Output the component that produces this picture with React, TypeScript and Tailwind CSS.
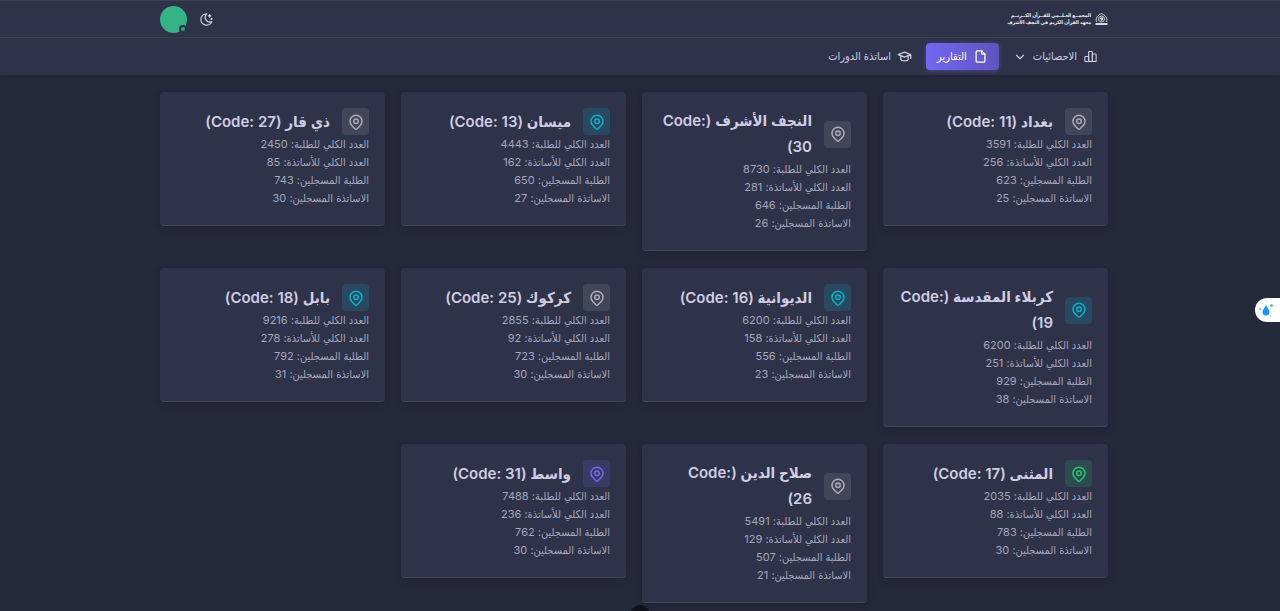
import { TbMapPin, TbFile, TbSchool, TbMoonStars, TbChevronDown } from "react-icons/tb";

type Tone = "gray" | "cyan" | "green" | "violet";

interface Province {
  name: string;
  code: number;
  students: number;
  teachers: number;
  registeredStudents: number;
  registeredTeachers: number;
  tone: Tone;
}

const provinces: Province[] = [
  { name: "بغداد", code: 11, students: 3591, teachers: 256, registeredStudents: 623, registeredTeachers: 25, tone: "gray" },
  { name: "النجف الأشرف", code: 30, students: 8730, teachers: 281, registeredStudents: 646, registeredTeachers: 26, tone: "gray" },
  { name: "ميسان", code: 13, students: 4443, teachers: 162, registeredStudents: 650, registeredTeachers: 27, tone: "cyan" },
  { name: "ذي قار", code: 27, students: 2450, teachers: 85, registeredStudents: 743, registeredTeachers: 30, tone: "gray" },
  { name: "كربلاء المقدسة", code: 19, students: 6200, teachers: 251, registeredStudents: 929, registeredTeachers: 38, tone: "cyan" },
  { name: "الديوانية", code: 16, students: 6200, teachers: 158, registeredStudents: 556, registeredTeachers: 23, tone: "cyan" },
  { name: "كركوك", code: 25, students: 2855, teachers: 92, registeredStudents: 723, registeredTeachers: 30, tone: "gray" },
  { name: "بابل", code: 18, students: 9216, teachers: 278, registeredStudents: 792, registeredTeachers: 31, tone: "cyan" },
  { name: "المثنى", code: 17, students: 2035, teachers: 88, registeredStudents: 783, registeredTeachers: 30, tone: "green" },
  { name: "صلاح الدين", code: 26, students: 5491, teachers: 129, registeredStudents: 507, registeredTeachers: 21, tone: "gray" },
  { name: "واسط", code: 31, students: 7488, teachers: 236, registeredStudents: 762, registeredTeachers: 30, tone: "violet" },
];

const tones: Record<Tone, string> = {
  gray: "bg-[#424659] text-[#a9abb9]",
  cyan: "bg-[#28495f] text-[#06b3ca]",
  green: "bg-[#2e4b4f] text-[#28c76f]",
  violet: "bg-[#3a3b64] text-[#7367f0]",
};

function ProvinceCard({ item }: { item: Province }) {
  return (
    <article className="rounded border-b border-[#43475b] bg-[#2f3349] px-4 pt-4 pb-[18px] shadow-[0_2px_6px_rgba(19,17,32,0.25)]">
      <div className="flex items-center gap-3">
        <span className={`flex size-[27px] shrink-0 items-center justify-center rounded ${tones[item.tone]}`}>
          <TbMapPin className="size-[18px]" />
        </span>
        <h2 className="text-[15px] leading-[26px] font-semibold text-[#cfcce4]">
          <span className="pe-1">{`${item.name} (Code: ${item.code})`}</span>
        </h2>
      </div>
      <div className="text-[11px] leading-[18px] text-[#a5a5bc]">
        <p>{`العدد الكلي للطلبة: ${item.students}`}</p>
        <p>{`العدد الكلي للأساتذة: ${item.teachers}`}</p>
        <p>{`الطلبة المسجلين: ${item.registeredStudents}`}</p>
        <p>{`الاساتذة المسجلين: ${item.registeredTeachers}`}</p>
      </div>
    </article>
  );
}

function Emblem() {
  return (
    <svg viewBox="0 0 26 26" className="size-[13px]" fill="none" stroke="currentColor" strokeWidth="1.6">
      <path d="M3 18C0 10 6 4 13 1c7 3 13 9 10 17" />
      <circle cx="13" cy="12" r="6" />
      <path d="M11 12c0-3 5-3 4 0l-3 3" strokeWidth="2.5" />
      <path d="M1 22h24" strokeWidth="3.5" />
    </svg>
  );
}

function BarsIcon() {
  return (
    <svg viewBox="0 0 24 24" className="size-[15px]" fill="none" stroke="currentColor" strokeWidth="1.8" strokeLinejoin="round">
      <rect x="3" y="12" width="6" height="8" rx="1" />
      <rect x="9" y="4" width="6" height="16" rx="1" />
      <rect x="15" y="8" width="6" height="12" rx="1" />
      <path d="M4 20h16" />
    </svg>
  );
}

export default function App() {
  return (
    <div
      dir="rtl"
      className="relative min-h-screen overflow-hidden bg-[#25293c] pb-[9px] font-['Inter','DejaVu_Sans_Condensed','DejaVu_Sans',sans-serif] text-[#cfcce4]"
    >
      <header className="border-t border-b border-t-[#3e4149] border-b-[#414559] bg-[#2f3349] pr-3">
        <div className="mx-auto flex h-9 max-w-[948px] items-center justify-between">
          <a href="#" className="flex items-center gap-1 text-[#f1f1f6]">
            <Emblem />
            <span className="text-[5px] leading-[7px] font-bold whitespace-nowrap">
              <span className="block">المجمــع العـلــمي للقــرآن الكــريــم</span>
              <span className="block">معهد القرآن الكريم في النجف الأشرف</span>
            </span>
          </a>
          <div className="flex items-center gap-3">
            <button type="button" aria-label="الوضع الليلي">
              <TbMoonStars className="size-[15px]" />
            </button>
            <button type="button" aria-label="الحساب" className="relative size-[27px] rounded-full bg-[#36b386]">
              <span className="absolute right-0 bottom-0 size-2 rounded-full border-2 border-[#2f3349] bg-[#28a878]" />
            </button>
          </div>
        </div>
      </header>

      <nav className="bg-[#2f3349] pr-3 shadow-[0_1px_4px_rgba(19,17,32,0.2)]">
        <div className="mx-auto flex h-[37px] max-w-[948px] items-center gap-1 text-[11px]">
          <button type="button" className="flex h-[27px] items-center gap-[6px] px-[10px]">
            <BarsIcon />
            <span>الاحصائيات</span>
            <TbChevronDown className="size-[14px]" />
          </button>
          <a
            href="#"
            className="flex h-[27px] items-center gap-[6px] rounded bg-linear-to-l from-[#5f55bf] to-[#7367f0] px-[11px] text-white shadow-[0_1px_4px_rgba(115,103,240,0.4)]"
          >
            <TbFile className="size-[15px]" />
            <span>التقارير</span>
          </a>
          <a href="#" className="flex h-[27px] items-center gap-[6px] px-[10px]">
            <TbSchool className="size-[15px]" />
            <span>اساتذة الدورات</span>
          </a>
        </div>
      </nav>

      <main className="pt-[17px] pr-3">
        <div className="mx-auto grid max-w-[948px] grid-cols-4 items-start gap-x-4 gap-y-[17px]">
          {provinces.map((item) => (
            <ProvinceCard key={item.code} item={item} />
          ))}
        </div>
      </main>

      <button
        type="button"
        aria-label="المظهر"
        className="fixed top-[298px] right-0 flex h-6 w-[25px] items-center justify-end rounded-l-full bg-white pl-[3px]"
      >
        <svg viewBox="0 0 18 16" className="h-4 w-[18px] shrink-0" fill="#2196e8">
          <path d="M8 3C7 5.500 4.500 7.500 4.500 10a3.500 3.500 0 0 0 7 0C11.500 7.500 9 5.500 8 3Z" />
          <circle cx="13.500" cy="3.500" r="1.500" opacity=".7" />
          <circle cx="2" cy="7" r="1" opacity=".7" />
          <circle cx="12.500" cy="13.500" r="1" opacity=".4" />
        </svg>
      </button>
      <span className="fixed -bottom-[14px] left-1/2 size-5 -translate-x-1/2 rounded-full bg-[#111218]" />
    </div>
  );
}
